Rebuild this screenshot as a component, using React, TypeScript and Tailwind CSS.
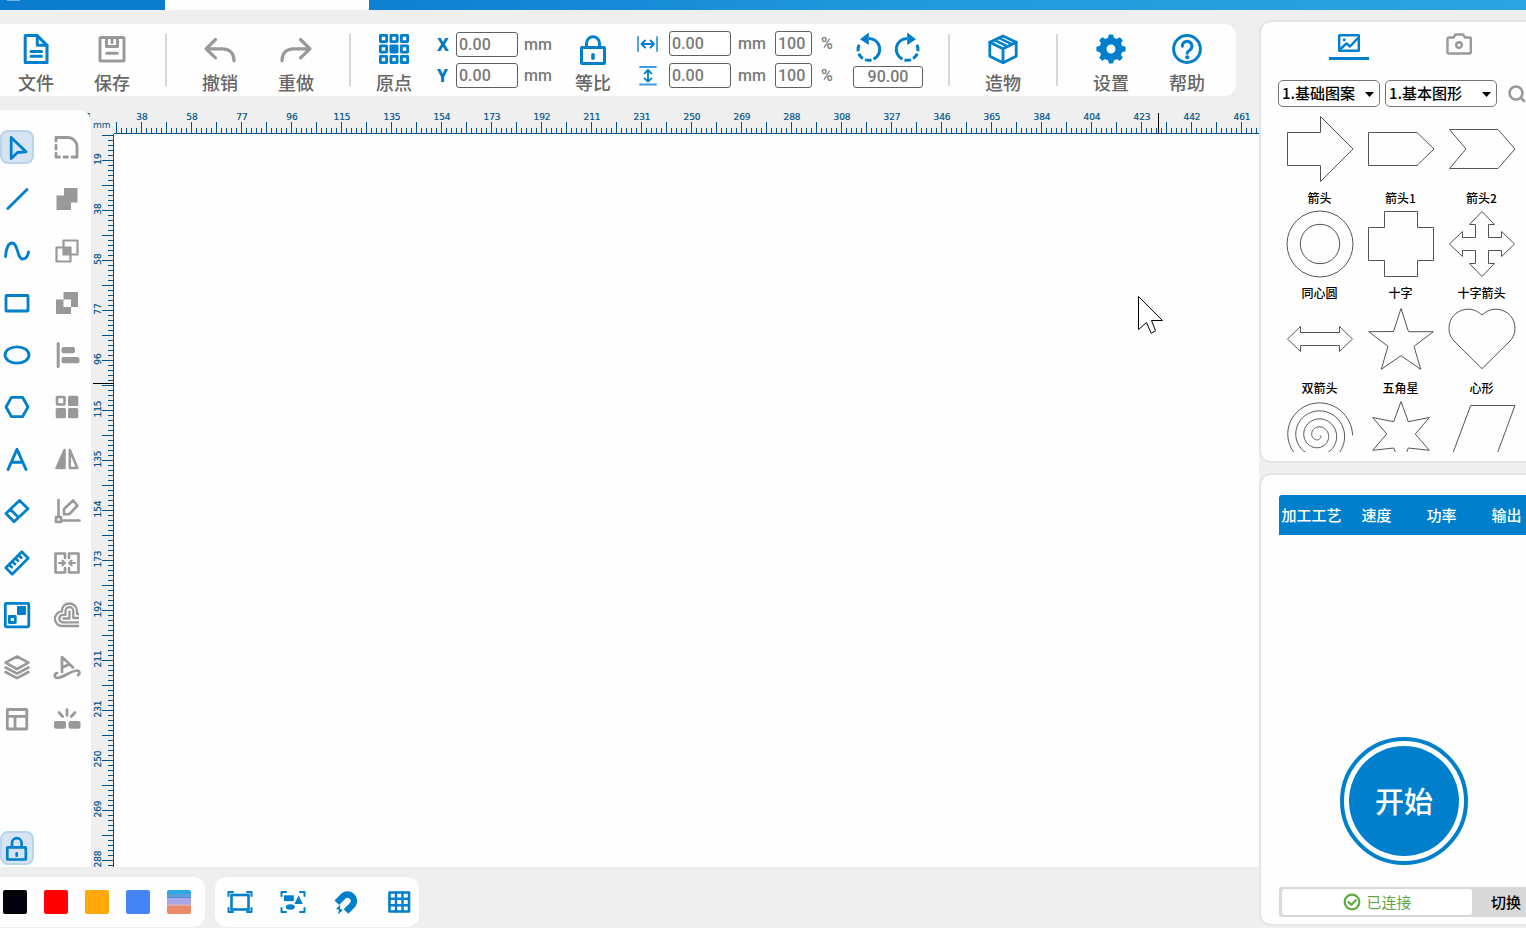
import React, { useEffect, useRef, useState } from "react";

const BLUE = "#0080cc";
const GRAY = "#999999";

type DrawProps = {
  w: number;
  h: number;
  color?: string;
  sw?: number;
  className?: string;
  children: React.ReactNode;
};

function Draw({ w, h, color = BLUE, sw = 3, className = "", children }: DrawProps) {
  return (
    <svg
      width={w}
      height={h}
      viewBox={`0 0 ${w} ${h}`}
      fill="none"
      stroke={color}
      strokeWidth={sw}
      strokeLinecap="round"
      strokeLinejoin="round"
      aria-hidden="true"
      className={`block shrink-0 overflow-visible ${className}`}
    >
      {children}
    </svg>
  );
}

/* ---------- top toolbar ---------- */

function Action({ label, children }: { label: string; children: React.ReactNode }) {
  return (
    <button type="button" className="flex w-[52px] shrink-0 flex-col items-center gap-[6px] pt-[10px]">
      {children}
      <span className="text-[18px] leading-6 font-medium whitespace-nowrap text-[#666]">{label}</span>
    </button>
  );
}

function Separator() {
  return <div className="mx-[27px] mt-[10px] h-[52px] w-0.5 shrink-0 bg-[#d8d8d8]" />;
}

function Field({ label, value, className }: { label: string; value: string; className: string }) {
  return (
    <input
      aria-label={label}
      defaultValue={value}
      className={`shrink-0 rounded-[3px] border border-[#606060] bg-white font-[Roboto,sans-serif] text-[16px] font-medium text-[#7a7a7a] outline-none ${className}`}
    />
  );
}

function Unit({ wide, children }: { wide?: boolean; children: React.ReactNode }) {
  return (
    <span
      className={`font-[Roboto,sans-serif] text-[16px] leading-6 font-medium text-[#7a7a7a] ${wide ? "w-7" : "w-4"}`}
    >
      {children}
    </span>
  );
}

const originCells = [0, 1, 2].flatMap((r) => [0, 1, 2].map((c) => ({ r, c })));

function Toolbar() {
  return (
    <div className="mt-[14px] flex h-[72px] w-fit shrink-0 rounded-r-xl bg-[#fefefe] pr-[23px] pl-[10px]">
      <div className="flex gap-6">
        <Action label="文件">
          <Draw w={30} h={30}>
            <path d="M4.200 1.600h12L26 11.400V28.400H4.200Z" />
            <path d="M16.300 2v9.300H26" />
            <path d="M10 17.500h10.500M10 22.300h10.500" />
          </Draw>
        </Action>
        <Action label="保存">
          <Draw w={30} h={30} color={GRAY}>
            <rect x="3" y="3.500" width="24" height="23.500" rx="1" />
            <path d="M9.500 4v8.500h11V4" />
            <path d="M15 5v3.500" />
            <path d="M9.800 19.300h10.500" />
          </Draw>
        </Action>
      </div>
      <Separator />
      <div className="flex gap-6">
        <Action label="撤销">
          <Draw w={30} h={30} color={GRAY} sw={3.2}>
            <path d="M10.500 5.500L1 14.800l9.500 9M2 14.800h15.500c7 0 11.500 4.500 11.500 12" />
          </Draw>
        </Action>
        <Action label="重做">
          <Draw w={30} h={30} color={GRAY} sw={3.2}>
            <path d="M19.500 5.500l9.500 9.300-9.500 9M28 14.800H12.500C5.500 14.800 1 19.300 1 26.800" />
          </Draw>
        </Action>
      </div>
      <div className="mt-[10px] mr-[17px] ml-[27px] h-[52px] w-0.5 shrink-0 bg-[#d8d8d8]" />
      <Action label="原点">
        <Draw w={30} h={30} sw={2.8}>
          {originCells.map(({ r, c }) => (
            <rect
              key={`${r}${c}`}
              x={c * 10.5 + 1.4}
              y={r * 10.5 + 1.4}
              width="6.200"
              height="6.200"
              fill={r === 1 && c === 1 ? BLUE : "none"}
            />
          ))}
        </Draw>
      </Action>

      <div className="mt-2 ml-[17px] flex flex-col gap-[6px]">
        {["X", "Y"].map((axis) => (
          <div key={axis} className="flex h-[25px] items-center">
            <span className="w-[19px] font-['Noto_Sans',sans-serif] text-[17px] leading-6 font-extrabold text-[#0078c4]">
              {axis}
            </span>
            <Field label={`${axis} mm`} value="0.00" className="mr-[6px] h-[25px] w-[62px] px-[2px]" />
            <Unit wide>mm</Unit>
          </div>
        ))}
      </div>

      <div className="mx-[15px]">
        <Action label="等比">
          <Draw w={30} h={30}>
            <rect x="3.500" y="13.500" width="23" height="16" rx="0.5" />
            <path d="M8.500 13V9.300a6.500 6.500 0 0 1 13 0V13" />
            <path d="M15 20.800v3.400" strokeWidth="3.600" />
          </Draw>
        </Action>
      </div>

      <div className="mt-[7px] ml-[3px] flex flex-col gap-[7px]">
        {["W", "H"].map((dim) => (
          <div key={dim} className="flex h-[25px] items-center">
            <div className="w-8">
              {dim === "W" ? (
                <Draw w={22} h={16} sw={1.8}>
                  <path d="M1 1v14M20 1v14" stroke="#3b9ddb" />
                  <path d="M5 8h11.500M8 4.500L4.500 8 8 11.500M13.500 4.500L17 8l-3.500 3.500" />
                </Draw>
              ) : (
                <Draw w={22} h={20} sw={1.8}>
                  <path d="M3 1h16M3 18.500h16" stroke="#3b9ddb" />
                  <path d="M11 4.500v10.500M7.500 7.300L11 4l3.500 3.300M7.500 12.300L11 15.600l3.500-3.300" />
                </Draw>
              )}
            </div>
            <Field label={`${dim} mm`} value="0.00" className="mr-[7px] h-[25px] w-[62px] px-[2px]" />
            <Unit wide>mm</Unit>
            <Field label={`${dim} %`} value="100" className="mr-[9px] ml-[9px] h-[25px] w-[37px] px-[2px]" />
            <Unit>%</Unit>
          </div>
        ))}
      </div>

      <div className="mt-2 ml-4 flex w-[70px] flex-col gap-1">
        <div className="flex justify-between px-[3px]">
          <button type="button" aria-label="-90°">
            <Draw w={26} h={30}>
              <path d="M13 6.500a10.800 10.800 0 0 1 4.500 20.600" strokeLinecap="butt" />
              <path d="M15.500 28a10.800 10.800 0 0 1-11.500-16.700" strokeDasharray="6.500 2.400" strokeLinecap="butt" />
              <path d="M12.800 0.500v12.500L4 7.200z" fill={BLUE} stroke="none" />
            </Draw>
          </button>
          <button type="button" aria-label="+90°">
            <Draw w={26} h={30}>
              <path d="M13 6.500a10.800 10.800 0 0 0-4.500 20.600" strokeLinecap="butt" />
              <path d="M10.500 28a10.800 10.800 0 0 0 11.500-16.700" strokeDasharray="6.500 2.400" strokeLinecap="butt" />
              <path d="M13.200 0.500v12.500L22 7.200z" fill={BLUE} stroke="none" />
            </Draw>
          </button>
        </div>
        <Field label="角度" value="90.00" className="h-[22px] w-[70px] text-center" />
      </div>

      <div className="mt-[10px] mr-[27px] ml-[25px] h-[52px] w-0.5 shrink-0 bg-[#d8d8d8]" />
      <Action label="造物">
        <Draw w={30} h={30} sw={2.8}>
          <path d="M15 2l13.200 6.200v14L15 28.700 1.800 22.200v-14z" />
          <path d="M1.800 8.200L15 14.800l13.200-6.600M15 14.800v13.500" />
          <path d="M6.500 6.200l13 6.200M10.800 4l13 6.200" strokeWidth="2.400" />
        </Draw>
      </Action>
      <Separator />
      <div className="flex gap-6">
        <Action label="设置">
          <Draw w={30} h={30}>
            <circle cx="15" cy="15" r="8" strokeWidth="7" />
            {[0, 45, 90, 135, 180, 225, 270, 315].map((a) => (
              <path key={a} d="M12.800 5l0.800-3.600h2.800l0.800 3.600z" strokeWidth="2" fill={BLUE} transform={`rotate(${a} 15 15)`} />
            ))}
          </Draw>
        </Action>
        <Action label="帮助">
          <Draw w={30} h={30}>
            <circle cx="15" cy="15" r="13.400" />
            <path d="M10.300 12.200a4.800 4.800 0 1 1 7.300 4.000c-1.800 1.100-2.400 1.700-2.400 3.000" />
            <circle cx="15.200" cy="23.300" r="2.100" fill={BLUE} stroke="none" />
          </Draw>
        </Action>
      </div>
    </div>
  );
}

/* ---------- left tool panel ---------- */

type Tool = { name: string; color?: string; sw?: number; art: React.ReactNode };

const solid = { fill: GRAY, stroke: "none" };

const tools: Tool[] = [
  { name: "选择", sw: 2.8, art: <path d="M11.200 7.500L26 21.800l-8.500 0.700-6.300 6z" /> },
  {
    name: "圆角", color: GRAY, sw: 2.8,
    art: (
      <>
        <path d="M6 11V7.500h12a9 9 0 0 1 9 9V27" />
        <path d="M6 15.500V19M6 23.500V27h3.500M14 27h3.500M22 27h5" />
      </>
    ),
  },
  { name: "直线", sw: 2.8, art: <path d="M7.800 26.500L27 7.500" /> },
  { name: "合并", color: GRAY, art: <path {...solid} d="M14 6h13.500v14.500H21V28H6.500V13.500H14z" /> },
  { name: "曲线", sw: 2.8, art: <path d="M5.500 22.500C6.500 12 9 9 12 9c6.200 0 5 16 10.500 16 3.500 0 5.300-3 6-7" /> },
  {
    name: "相交", color: GRAY, sw: 2.2,
    art: (
      <>
        <rect x="6.500" y="13.500" width="14" height="14" />
        <rect x="13.500" y="6.500" width="14" height="14" />
        <rect {...solid} x="13" y="13" width="8" height="8" />
      </>
    ),
  },
  { name: "矩形", sw: 2.8, art: <rect x="6" y="9.500" width="22" height="15.500" rx="0.500" /> },
  {
    name: "排除", color: GRAY,
    art: <path {...solid} fillRule="evenodd" d="M13.500 6H28v15h-7v7H6V13.500h7.500zM13.500 13.500V21H21v-7.500z" />,
  },
  { name: "椭圆", sw: 2.8, art: <ellipse cx="17" cy="17" rx="12" ry="8.200" /> },
  {
    name: "对齐", color: GRAY,
    art: (
      <>
        <path d="M8.200 5.500v23" />
        <rect {...solid} x="11.500" y="9" width="13.500" height="6.300" rx="2" />
        <rect {...solid} x="11.500" y="19" width="18" height="6.300" rx="2" />
      </>
    ),
  },
  { name: "多边形", sw: 2.8, art: <path d="M11.500 7.300h11L28 17l-5.500 9.700h-11L6 17z" /> },
  {
    name: "阵列", color: GRAY, sw: 2.6,
    art: (
      <>
        <rect x="7" y="7" width="7.500" height="7.500" rx="0.500" />
        <rect {...solid} x="18" y="5.700" width="10.300" height="10.300" rx="1.500" />
        <rect {...solid} x="5.700" y="18" width="10.300" height="10.300" rx="1.500" />
        <rect {...solid} x="18" y="18" width="10.300" height="10.300" rx="1.500" />
      </>
    ),
  },
  { name: "文字", sw: 2.9, art: <path d="M8 27.500L17 7.300l9 20.200M11.500 20.300h11" /> },
  {
    name: "镜像", color: GRAY, sw: 2.5,
    art: (
      <>
        <path fill={GRAY} d="M14.500 8v18H6.500z" />
        <path d="M19.800 8v18h7.500z" />
      </>
    ),
  },
  { name: "橡皮擦", sw: 2.8, art: <path d="M19.500 6.500L28 14.800 14 27.800 6 19.500zM10.500 15.500l8 8" /> },
  {
    name: "编辑", color: GRAY, sw: 2.6,
    art: (
      <>
        <path d="M8.500 6v16M12 26.500h17.500" />
        <rect x="6" y="23" width="5" height="5" />
        <path d="M14 20.500v-5.500L23 6.500l4.500 5-8 8.500z" />
      </>
    ),
  },
  {
    name: "测量", sw: 2.7,
    art: (
      <path d="M21.800 5.800l6.400 6.400-16 16-6.400-6.400zM9.200 18.800l2.500 2.500M12.400 15.600l2.500 2.500M15.600 12.400l2.500 2.500M18.800 9.200l2.500 2.500" />
    ),
  },
  {
    name: "拼合", color: GRAY, sw: 2.6,
    art: (
      <>
        <path d="M15 12V7.500H5.500v19H15V22M19 12V7.500h9.500v19H19V22" />
        <path d="M9 17h5.500M12.300 14.500L15 17l-2.700 2.500M25 17h-5.500M21.700 14.500L19 17l2.700 2.500" strokeWidth="2" />
      </>
    ),
  },
  {
    name: "位图", sw: 2.8,
    art: (
      <>
        <rect x="5.300" y="5.300" width="23.500" height="23.500" rx="1" />
        <rect x="17" y="8" width="9" height="9" rx="1" fill={BLUE} stroke="none" />
        <rect x="9.300" y="18.500" width="6" height="6" />
      </>
    ),
  },
  {
    name: "偏移", color: GRAY, sw: 2.3,
    art: (
      <g strokeLinecap="butt">
        <path d="M29 28H12.500a7.300 7.300 0 0 1-0.500-14.600C12 8.500 15 5.500 19.300 5.500s7.700 3 7.700 7.300V16h2" />
        <path d="M29 24.300H12.500a3.800 3.800 0 0 1 0-7.500h3V13a3.900 3.900 0 0 1 7.800 0v7H29" />
        <path d="M19.500 12.500v8h-7" />
      </g>
    ),
  },
  {
    name: "图层", color: GRAY, sw: 2.6,
    art: <path d="M17 6.500l11.500 6.200L17 19 5.500 12.700zM5.500 17.500L17 23.700l11.500-6.200M5.500 22L17 28.200 28.500 22" />,
  },
  {
    name: "路径文字", color: GRAY, sw: 2.7,
    art: (
      <path d="M12 22V7l11 10.500M12.500 17.500l6-3M7 23.200c-3.500 0.500-3 5.500 2 4.500 6-1.300 12-6.500 17.500-7.200 3.300-0.300 3.800 3.500 1.500 4.500" />
    ),
  },
  {
    name: "布局", color: GRAY, sw: 2.8,
    art: (
      <>
        <rect x="7.300" y="7.500" width="19.500" height="19.500" rx="0.500" />
        <path d="M7.300 14.300h19.500M15 14.300V27" />
      </>
    ),
  },
  {
    name: "打散", color: GRAY, sw: 2.7,
    art: (
      <>
        <path d="M17 7.500v6M9 10.500l3.700 4M25 10.500l-3.700 4" />
        <rect {...solid} x="4" y="19" width="12" height="7.700" rx="2" />
        <rect {...solid} x="18.500" y="19" width="12" height="7.700" rx="2" />
      </>
    ),
  },
];

const pressed = "border-2 border-[#bbd4ec] bg-[#d5e3f2]";

function ToolPanel() {
  return (
    <div className="relative z-10 flex w-[91px] shrink-0 flex-col justify-between rounded-tr-xl bg-[#fefefe] pt-5 pb-0.5">
      <div className="grid w-fit grid-cols-2 gap-x-4 gap-y-[18px]">
        {tools.map((t, i) => (
          <button
            key={t.name}
            type="button"
            aria-label={t.name}
            className={`flex size-[34px] items-center justify-center rounded-lg ${i === 0 ? pressed : ""}`}
          >
            <Draw w={34} h={34} color={t.color} sw={t.sw}>
              {t.art}
            </Draw>
          </button>
        ))}
      </div>
      <button type="button" aria-label="锁定" className={`flex size-[34px] items-center justify-center rounded-lg ${pressed}`}>
        <Draw w={34} h={34} sw={2.7}>
          <rect x="7.300" y="16.300" width="18.500" height="12.200" rx="0.500" />
          <path d="M12 16v-4a4.800 4.800 0 0 1 9.600 0v4M16.700 22.300v2.400" />
        </Draw>
      </button>
    </div>
  );
}

/* ---------- rulers and canvas ---------- */

const INK = "#00528a";
const mm = (n: number) => Math.round(n * 19.22);
const range = (n: number) => Array.from({ length: Math.max(0, n) }, (_, i) => i);

function useSize() {
  const ref = useRef<HTMLDivElement>(null);
  const [size, setSize] = useState({ width: 0, height: 0 });
  useEffect(() => {
    const el = ref.current;
    if (!el) return;
    const read = () => setSize({ width: el.clientWidth, height: el.clientHeight });
    read();
    const observer = new ResizeObserver(read);
    observer.observe(el);
    return () => observer.disconnect();
  }, []);
  return { ref, ...size };
}

function Workspace() {
  const { ref, width, height } = useSize();
  const hTicks = range(Math.ceil(width / 5)).map((i) => `M${i * 5 + 2.5} ${i % 5 === 0 ? 12 : 18}V24`).join("");
  const vTicks = range(Math.ceil(height / 5)).map((i) => `M${i % 5 === 0 ? 11 : 17} ${i * 5 + 1.5}H23`).join("");

  return (
    <div className="mt-[14px] flex flex-1">
      <ToolPanel />
      <div className="grid min-w-0 flex-1 grid-cols-[23px_1fr] grid-rows-[24px_1fr] font-['DejaVu_Sans',sans-serif] text-[9px] text-[#00528a]">
        <div className="relative pt-2 pl-0.5 leading-[14px]">
          mm
          <span className="absolute top-0 -left-[5px]">1</span>
        </div>
        <div className="overflow-hidden">
          <svg className="block h-6 w-full" aria-hidden="true">
            <path d={hTicks} stroke={INK} shapeRendering="crispEdges" />
            <path d={`M0 23.500H${width}`} stroke={INK} shapeRendering="crispEdges" />
            <path d="M1044.500 3V23" stroke="#000" shapeRendering="crispEdges" />
            {range(Math.floor((width + 12) / 50)).map((i) => (
              <text key={i} x={28 + i * 50} y="10" textAnchor="middle" fill={INK} stroke={INK} strokeWidth="0.2">
                {mm(i + 2)}
              </text>
            ))}
          </svg>
        </div>
        <div className="relative min-h-[480px] overflow-hidden">
          <svg className="absolute inset-0 h-full w-full" aria-hidden="true">
            <path d={vTicks} stroke={INK} shapeRendering="crispEdges" />
            <path d={`M22.500 0V${height}`} stroke={INK} shapeRendering="crispEdges" />
            <path d="M2 249.500H22" stroke="#000" shapeRendering="crispEdges" />
            {range(Math.floor((height + 18) / 50)).map((i) => (
              <text key={i} transform={`translate(10 ${25 + i * 50}) rotate(-90)`} textAnchor="middle" fill={INK} stroke={INK} strokeWidth="0.2">
                {mm(i + 1)}
              </text>
            ))}
          </svg>
        </div>
        <main ref={ref} className="relative overflow-hidden bg-[#fefefe]">
          <svg className="absolute top-[162px] left-[1024px]" width="27" height="40" viewBox="0 0 27 40" aria-hidden="true">
            <path d="M0.500 0.500L24.500 24.500H13.500L17.500 34.800 13.200 37.300 8.500 26.500 0.500 33.500z" fill="#fff" stroke="#000" />
          </svg>
        </main>
      </div>
    </div>
  );
}

/* ---------- bottom bar ---------- */

const swatches = [
  { name: "黑色", cls: "bg-[#02020a]" },
  { name: "红色", cls: "bg-[#ff0000]" },
  { name: "橙色", cls: "bg-[#ffa90a]" },
  { name: "蓝色", cls: "bg-[#4585f5]" },
  {
    name: "更多颜色",
    cls: "bg-[linear-gradient(#2ba9e6_0_4px,#5b9fd8_4px_7px,#4a8fd6_7px_8px,#a9a6e6_8px_14px,#d0adba_14px_16px,#ea8a66_16px)]",
  },
];

function BottomBar() {
  return (
    <div className="mt-[10px] mb-px flex h-[50px] shrink-0 gap-[10px]">
      <div className="flex items-center gap-[17px] rounded-r-xl bg-[#fefefe] pr-[14px] pl-[3px]">
        {swatches.map((s) => (
          <button key={s.name} type="button" aria-label={s.name} className={`size-6 rounded-xs ${s.cls}`} />
        ))}
      </div>
      <div className="flex items-center gap-[23px] rounded-xl bg-[#fefefe] pr-[5px] pl-[10px]">
        <button type="button" aria-label="适应画布">
          <Draw w={30} h={30} sw={2}>
            <rect x="6.500" y="8" width="17" height="14.500" strokeWidth="2.600" strokeLinejoin="miter" />
            <path d="M3.500 9V5h4.500M22 5h4.500v4M26.500 21v4H22M8 25H3.500v-4" />
          </Draw>
        </button>
        <button type="button" aria-label="适应图形">
          <Draw w={30} h={30} sw={2}>
            <path d="M3.500 9V5h4.500M22 5h4.500v4M26.500 21v4H22M8 25H3.500v-4" />
            <g fill={BLUE} stroke="none">
              <rect x="6" y="8.300" width="9.800" height="5.800" />
              <path d="M20.600 8.500l4.200 8.500h-8.400z" />
              <ellipse cx="12.300" cy="20" rx="4.500" ry="2.700" />
            </g>
          </Draw>
        </button>
        <button type="button" aria-label="吸附">
          <Draw w={30} h={30} sw={6.5}>
            <path d="M5.800 15.700l6.700-6.700A6.400 6.400 0 0 1 21.500 18l-6.500 6.500" strokeLinecap="butt" />
            <path d="M9.500 17.500l-4.500 4.500 3 0.800-1 4.700 4.800-4.500-3-1.200z" fill={BLUE} stroke="none" />
          </Draw>
        </button>
        <button type="button" aria-label="网格">
          <Draw w={30} h={30} sw={2.6}>
            <rect x="5.500" y="5.500" width="19.500" height="19" />
            <path d="M12 5.500v19M18.500 5.500v19M5.500 11.800H25M5.500 18.200H25" strokeWidth="2.400" />
          </Draw>
        </button>
      </div>
    </div>
  );
}

/* ---------- shape library ---------- */

const spiral = (() => {
  const pts: string[] = [];
  for (let i = 0; i <= 240; i++) {
    const t = i / 60;
    const a = 2 * Math.PI * (4 - t);
    const r = 2.4 + 8 * t;
    pts.push(`${(32.2 + r * Math.cos(a)).toFixed(2)} ${(35.3 - r * Math.sin(a)).toFixed(2)}`);
  }
  return `M${pts.join("L")}`;
})();

const shapes: { label?: string; d: string }[] = [
  { label: "箭头", d: "M1.500 17.500H34.500V1.500L67 34 34.500 66.500V50.500H1.500z" },
  { label: "箭头1", d: "M1.500 17.500H50L67 34 50 50.500H1.500z" },
  { label: "箭头2", d: "M1.500 14.500H50L67 34 50 53.500H1.500L18 34z" },
  { label: "同心圆", d: "M1 34a33 33 0 1 0 66 0a33 33 0 1 0-66 0zM14.300 34a19.700 19.700 0 1 0 39.400 0a19.700 19.700 0 1 0-39.400 0z" },
  { label: "十字", d: "M17.500 1.500H50.500V17.500H66.500V50.500H50.500V66.500H17.500V50.500H1.500V17.500H17.500z" },
  {
    label: "十字箭头",
    d: "M34 1.500L46.500 14.500H40.500V27.500H53.500V21.500L66.500 34 53.500 46.500V40.500H40.500V53.500H46.500L34 66.500 21.500 53.500H27.500V40.500H14.500V46.500L1.500 34 14.500 21.500V27.500H27.500V14.500H21.500z",
  },
  { label: "双箭头", d: "M1.500 34L14.500 21.500V27.500H53.500V21.500L66.500 34 53.500 46.500V40.500H14.500V46.500z" },
  {
    label: "五角星",
    d: "M34 3.500L41.500 26.700 66.300 26.700 47 41.300 53.700 64.300 34 50.700 14.300 64.300 21 41.300 1.700 26.700 26.500 26.500z",
  },
  {
    label: "心形",
    d: "M34 10C28 4.500 22 3.500 17 4.500 8 6 1 13 1 23.500c0 6 2.500 10 6 13.500L34 63.700 61 37c3.500-3.500 6-7.500 6-13.500C67 13 60 6 51 4.500 46 3.500 40 4.500 34 10z",
  },
  { d: spiral },
  {
    d: "M34 1.500L41.300 21.700 62.300 17.500 48.300 34 62.300 50.300 41.300 48 34 66.500 26.700 48 5.700 50.300 19.700 34 5.700 17.500 26.700 21.700z",
  },
  { d: "M22.700 5.500H67L45.500 63.500H1z" },
];

function Picker({ label, value, className }: { label: string; value: string; className: string }) {
  return (
    <div className={`relative h-[27px] shrink-0 ${className}`}>
      <select
        aria-label={label}
        defaultValue={value}
        className="block h-full w-full appearance-none rounded-[5px] border border-[#777] bg-white pl-[3px] text-[15px] font-medium text-black outline-none"
      >
        <option>{value}</option>
      </select>
      <svg className="pointer-events-none absolute top-3 right-[6px]" width="9" height="5" viewBox="0 0 9 5" aria-hidden="true">
        <path d="M0 0H9L4.500 5z" fill="#000" />
      </svg>
    </div>
  );
}

function ShapeLibrary() {
  return (
    <section className="shrink-0 rounded-xl border-2 border-[#e5e5e5] bg-[#fefefe] pt-2 pb-[9px]">
      <div className="flex h-[30px] justify-center">
        <button type="button" aria-label="图库" className="flex w-[110px] flex-col items-center justify-between pt-1">
          <Draw w={22} h={18} sw={2.4}>
            <rect x="1.200" y="1.200" width="19.600" height="15.600" rx="0.300" />
            <path d="M3 14.500l5.500-5 3.500 3L19.500 4.500" />
            <circle cx="6.200" cy="5.700" r="1.500" fill={BLUE} stroke="none" />
          </Draw>
          <span className="block h-[3px] w-10 bg-[#0080cc]" />
        </button>
        <button type="button" aria-label="相机" className="flex w-[110px] justify-center pt-[3px]">
          <Draw w={26} h={22} color={GRAY} sw={2.4}>
            <path d="M3.200 4.500H7.500L9.500 1.500h7.500l2 3h4.300c1 0 1.500 0.500 1.500 1.500v13c0 1-0.500 1.500-1.500 1.500H3c-1 0-1.500-0.500-1.500-1.500V6c0-1 0.500-1.500 1.700-1.500z" />
            <circle cx="13" cy="12" r="2.800" />
          </Draw>
        </button>
      </div>
      <div className="mt-5 flex items-center gap-[5px] pl-[17px]">
        <Picker label="图案分类" value="1.基础图案" className="w-[102px]" />
        <Picker label="图形分类" value="1.基本图形" className="w-[112px]" />
        <button type="button" aria-label="搜索" className="ml-[6px]">
          <Draw w={18} h={18} color={GRAY} sw={2.6}>
            <circle cx="8" cy="8" r="6.500" />
            <path d="M13 13l3 3" />
          </Draw>
        </button>
      </div>
      <div className="mt-2 ml-[18px] grid h-[337px] w-[243px] grid-cols-3 content-start overflow-hidden">
        {shapes.map((s, i) => (
          <button key={i} type="button" className="flex h-[95px] flex-col items-center gap-[7px]">
            <svg width="68" height="68" viewBox="0 0 68 68" fill="none" stroke="#555" strokeWidth="1" className="block shrink-0" aria-hidden="true">
              <path d={s.d} />
            </svg>
            {s.label && <span className="text-[12px] leading-4 font-medium text-black">{s.label}</span>}
          </button>
        ))}
      </div>
    </section>
  );
}

/* ---------- job panel ---------- */

function JobPanel() {
  return (
    <section className="flex flex-1 flex-col rounded-xl border-2 border-[#e5e5e5] bg-[#fefefe] pt-5 pb-[7px] pl-[18px]">
      <table className="w-[260px] table-fixed border-separate border-spacing-0 overflow-hidden rounded-tl-[3px] bg-[#0080cc] text-white">
        <thead>
          <tr className="h-10">
            {["加工工艺", "速度", "功率", "输出"].map((h) => (
              <th key={h} className="p-0 text-[15px] font-medium whitespace-nowrap">
                {h}
              </th>
            ))}
          </tr>
        </thead>
      </table>
      <div className="flex-1" />
      <div className="flex w-[250px] justify-center">
        <button
          type="button"
          className="flex size-32 items-center justify-center rounded-full border-4 border-[#0080cc] bg-white p-[5px]"
        >
          <span className="flex size-full items-center justify-center rounded-full bg-[#0080cc] text-[29px] font-medium text-white">
            开始
          </span>
        </button>
      </div>
      <div className="mt-[22px] flex h-[30px] items-center rounded-l-[3px] bg-[#d8d8d8] pl-[3px]">
        <div className="flex h-[26px] w-[190px] items-center justify-center gap-[6px] rounded-[3px] bg-white text-[15px] text-[#5fa845]">
          <Draw w={18} h={18} color="#5fa845" sw={2.2}>
            <circle cx="10" cy="9" r="7.300" />
            <path d="M6.500 9l2.800 2.800 4.500-4.600" />
          </Draw>
          已连接
        </div>
        <button type="button" className="ml-[19px] text-[15px] font-medium text-black">
          切换
        </button>
      </div>
    </section>
  );
}

export default function App() {
  return (
    <div className="flex min-h-screen flex-col overflow-hidden bg-[#efefef] font-['Noto_Sans_CJK_SC',sans-serif]">
      <header className="flex h-[10px] shrink-0 bg-[linear-gradient(90deg,#0a7bce,#0d80d2_25%,#2299dc_60%,#2ba4e1)]">
        <div className="ml-[7px] h-px w-[13px] bg-[#6fb5e6]" />
        <div className="ml-[145px] w-[204px] bg-[#fefefe]" />
      </header>
      <div className="flex flex-1">
        <div className="flex min-w-0 flex-1 flex-col">
          <Toolbar />
          <Workspace />
          <BottomBar />
        </div>
        <aside className="flex w-[267px] shrink-0 flex-col overflow-hidden pt-[10px] pb-0.5">
          <div className="flex w-[290px] flex-1 flex-col gap-[10px]">
            <ShapeLibrary />
            <JobPanel />
          </div>
        </aside>
      </div>
    </div>
  );
}
